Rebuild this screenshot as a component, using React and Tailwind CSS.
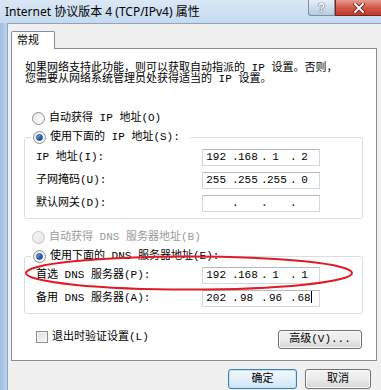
import React from 'react';

function Radio({ checked, disabled, label }) {
  return (
    <div className="flex items-center h-[13px]">
      <span
        className={`w-[13px] h-[13px] rounded-full border flex items-center justify-center ${
          disabled
            ? 'border-[#c5c5c5] bg-gradient-to-br from-[#f4f4f4] to-[#e6e6e6]'
            : 'border-[#8f8f8f] bg-gradient-to-br from-[#e8e8e8] to-[#fdfdfd]'
        }`}
      >
        {checked && (
          <span className="w-[7px] h-[7px] rounded-full bg-gradient-to-br from-[#8fc3ee] via-[#2a6fbf] to-[#0b3f86] border border-[#1d4e8c]" />
        )}
      </span>
      <span className={`ml-[4px] leading-[13px] ${disabled ? 'text-[#9a9a9a]' : 'text-black'}`}>{label}</span>
    </div>
  );
}

function IpBox({ parts, caret }) {
  return (
    <div className="w-[118px] h-[17px] border border-[#d3d7dc] border-t-[#b5b9bf] bg-white grid grid-cols-4 items-center">
      {parts.map((p, i) => (
        <div key={i} className="flex items-center h-full">
          <span className="w-[6px] text-left leading-none">{i > 0 ? '.' : ''}</span>
          <span className="flex-1 text-center pr-[6px] leading-none">
            {p}
            {caret && i === 3 && <span className="inline-block w-px h-[12px] bg-black align-middle -mt-[2px]" />}
          </span>
        </div>
      ))}
    </div>
  );
}

function Row({ label, parts, caret }) {
  return (
    <div className="flex items-center h-[17px] pr-[42px]">
      <span className="flex-1">{label}</span>
      <IpBox parts={parts} caret={caret} />
    </div>
  );
}

function Button({ children, primary, className }) {
  return (
    <div
      className={`flex items-center justify-center rounded-[3px] border ${
        primary
          ? 'border-[#3c7fb1] bg-gradient-to-b from-[#f3f9fd] via-[#e3f0fa] to-[#cde4f5] shadow-[inset_0_0_0_1px_#c8e4f7]'
          : 'border-[#707070] bg-gradient-to-b from-[#f2f2f2] via-[#ebebeb] to-[#d3d3d3] shadow-[inset_0_0_0_1px_#fcfcfc]'
      } ${className}`}
    >
      {children}
    </div>
  );
}

export default function App() {
  return (
    <div className="relative w-[381px] h-[390px] overflow-hidden bg-gradient-to-b from-[#c9dcf1] to-[#a9c6e6] flex flex-col text-[11px] text-black font-['Liberation_Mono','Noto_Sans_CJK_SC',monospace]">
      {/* title bar */}
      <div className="h-[23px] flex items-start bg-gradient-to-b from-[#dae7f5] to-[#c6daef]">
        <div className="pl-[5px] pt-[4px] text-[12px] leading-[16px] font-['Noto_Sans','Noto_Sans_CJK_SC',sans-serif] text-black">
          Internet 协议版本 4 (TCP/IPv4) 属性
        </div>
        <div className="ml-auto flex">
          <div className="w-[27px] h-[16px] border border-t-0 border-[#7f90a6] rounded-bl-[3px] bg-gradient-to-b from-[#e6eef7] to-[#b9cadf] flex items-center justify-center text-white text-[12px] font-bold font-['Liberation_Sans',sans-serif] [text-shadow:0_0_1px_#3d4d63,0_0_1px_#3d4d63]">
            ?
          </div>
          <div className="w-[46px] h-[16px] border border-t-0 border-r-0 border-[#6e2a22] bg-gradient-to-b from-[#e59b8c] via-[#d2594a] to-[#c1382a] flex items-center justify-center">
            <svg width="12" height="10" viewBox="0 0 12 10">
              <path d="M2 1 L10 9 M10 1 L2 9" stroke="#5a1a12" strokeWidth="3.4" strokeLinecap="square" />
              <path d="M2 1 L10 9 M10 1 L2 9" stroke="#ffffff" strokeWidth="2" strokeLinecap="square" />
            </svg>
          </div>
        </div>
      </div>

      <div className="flex-1 flex">
        <div className="w-[7px] bg-gradient-to-r from-[#9fbfe2] to-[#bcd3ec]" />
        <div className="flex-1 bg-[#f0f0f0] border-l border-t border-[#8ea3bd] pl-[3px] pr-[4px] pt-[7px] flex flex-col">
          {/* tab */}
          <div className="flex">
            <div className="w-[44px] h-[18px] -mb-px relative z-10 border border-b-0 border-[#898c95] rounded-t-[2px] bg-white pl-[5px] pt-[2px] leading-[14px]">
              常规
            </div>
          </div>
          {/* tab panel */}
          <div className="h-[313px] border border-[#898c95] bg-white pl-[12px] pr-[13px] pt-[14px] flex flex-col">
            <div className="pl-[1px] leading-[11px]">
              <div>如果网络支持此功能，则可以获取自动指派的 IP 设置。否则，</div>
              <div>您需要从网络系统管理员处获得适当的 IP 设置。</div>
            </div>

            <div className="mt-[27px] pl-[8px]">
              <Radio label="自动获得 IP 地址(O)" />
            </div>

            <div className="mt-[12px] border border-[#d5dfe5] rounded-[3px] pl-[11px] pb-[6px]">
              <div className="-mt-[7px] -ml-[5px] w-fit bg-white pl-[2px] pr-[10px]">
                <Radio checked label="使用下面的 IP 地址(S):" />
              </div>
              <div className="mt-[5px] flex flex-col gap-[6px]">
                <Row label="IP 地址(I):" parts={['192', '168', '1', '2']} />
                <Row label="子网掩码(U):" parts={['255', '255', '255', '0']} />
                <Row label="默认网关(D):" parts={['', '', '', '']} />
              </div>
            </div>

            <div className="mt-[12px] pl-[8px]">
              <Radio disabled label="自动获得 DNS 服务器地址(B)" />
            </div>

            <div className="mt-[12px] border border-[#d5dfe5] rounded-[3px] pl-[11px] pb-[6px]">
              <div className="-mt-[7px] -ml-[5px] w-fit bg-white pl-[2px] pr-[10px]">
                <Radio checked label="使用下面的 DNS 服务器地址(E):" />
              </div>
              <div className="mt-[4px] flex flex-col gap-[6px]">
                <Row label="首选 DNS 服务器(P):" parts={['192', '168', '1', '1']} />
                <Row label="备用 DNS 服务器(A):" parts={['202', '98', '96', '68']} caret />
              </div>
            </div>

            <div className="mt-[16px] flex items-start pl-[12px] pr-[1px]">
              <div className="mt-[1px] flex items-center h-[12px]">
                <span className="w-[12px] h-[12px] border border-[#8f8f8f] bg-gradient-to-br from-[#dcdcdc] to-[#f8f8f8] shadow-[inset_0_0_0_1px_#f4f4f4]" />
                <span className="ml-[4px]">退出时验证设置(L)</span>
              </div>
              <Button className="ml-auto w-[84px] h-[19px]">高级(V)...</Button>
            </div>
          </div>

          {/* dialog buttons */}
          <div className="mt-[8px] flex justify-end gap-[8px] pr-[6px]">
            <Button primary className="w-[69px] h-[20px]">确定</Button>
            <Button className="w-[66px] h-[20px]">取消</Button>
          </div>
        </div>
      </div>

      {/* red annotation ellipse */}
      <svg className="absolute left-[24px] top-[255px]" width="332" height="36" viewBox="0 0 332 36">
        <ellipse cx="165" cy="18" rx="163" ry="16.5" fill="none" stroke="#e01b24" strokeWidth="2" />
      </svg>
    </div>
  );
}
